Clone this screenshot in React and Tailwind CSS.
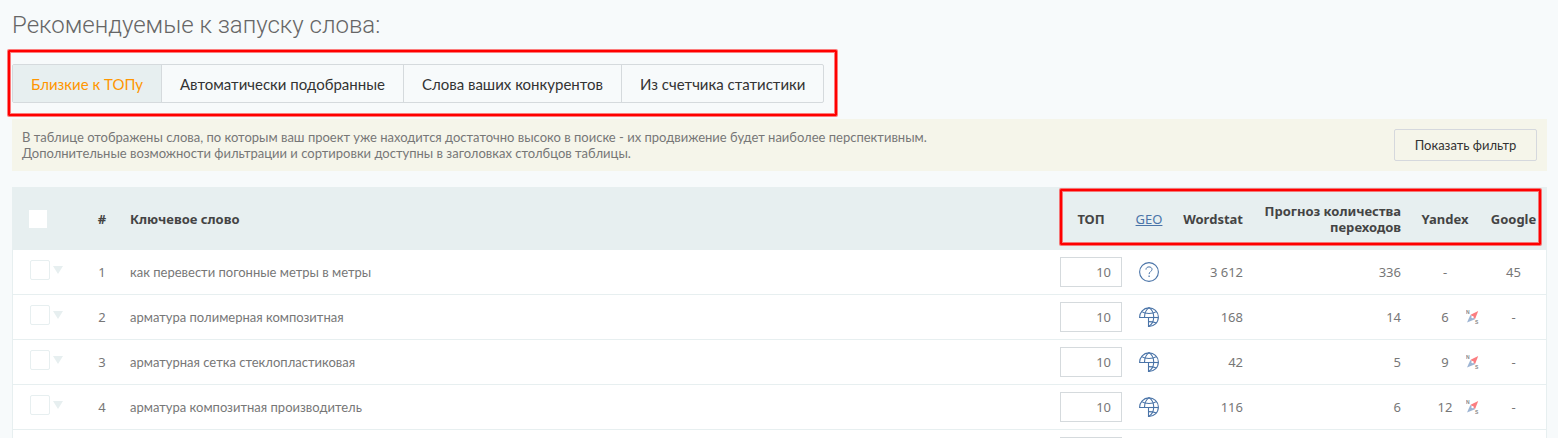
import React from "react";

const tabs = [
  "Близкие к ТОПу",
  "Автоматически подобранные",
  "Слова ваших конкурентов",
  "Из счетчика статистики",
];

const rows = [
  { n: 1, word: "как перевести погонные метры в метры", top: "10", geo: "unknown", wordstat: "3 612", visits: "336", yandex: "-", google: "45" },
  { n: 2, word: "арматура полимерная композитная", top: "10", geo: "globe", wordstat: "168", visits: "14", yandex: "6", compass: true, google: "-" },
  { n: 3, word: "арматурная сетка стеклопластиковая", top: "10", geo: "globe", wordstat: "42", visits: "5", yandex: "9", compass: true, google: "-" },
  { n: 4, word: "арматура композитная производитель", top: "10", geo: "globe", wordstat: "116", visits: "6", yandex: "12", compass: true, google: "-" },
  {},
];

function QuestionIcon() {
  return (
    <svg width="20" height="20" viewBox="0 0 20 20" fill="none" stroke="#4a74a8" className="mx-auto block">
      <circle cx="10" cy="10" r="9.4" strokeWidth="1.1" />
      <path d="M7 7.600C7 5.900 8.300 4.900 10 4.900s3 .9 3 2.500c0 2.100-2.900 2.200-2.900 4.700" strokeWidth="1" />
      <path d="M10.100 13.500v1.500" strokeWidth="1.200" />
    </svg>
  );
}

function GlobeIcon() {
  return (
    <svg width="20" height="20" viewBox="0 0 20 20" fill="none" stroke="#4a74a8" strokeWidth="1.1" className="mx-auto block">
      <path d="M.6 10.500A9.400 9.400 0 0 1 19.400 10 9.400 9.400 0 0 1 9.500 19.400V10.500Z" />
      <path d="M9.500 10.500H19.400" />
      <path d="M5.500 10.300C5.500 6 7.300 2.500 10 .6c2.900 1.900 4.700 5 4.700 9.400s-1.800 7.500-5 9.400" />
      <path d="M2.600 4.600c2 1.300 4.500 1.900 7.400 1.900s5.400-.6 7.400-1.900M9.500 14.600c3.200 0 5.800.5 7.900 1.300" />
    </svg>
  );
}

function CompassIcon() {
  return (
    <svg width="13" height="14" viewBox="0 0 13 14" className="block">
      <path d="M12.200 1 4.600 4.800 9 9.200Z" fill="#fb7d80" />
      <path d="M1 12.600 4.400 5 9 9.200Z" fill="#9db4d3" />
      <circle cx="6.500" cy="7.100" r="1.200" fill="#fff" />
      <text x="0" y="4.200" fontSize="5" fontFamily="Liberation Sans, sans-serif" fontWeight="700" fill="#888">N</text>
      <text x="9" y="13.800" fontSize="5" fontFamily="Liberation Sans, sans-serif" fontWeight="700" fill="#888">S</text>
    </svg>
  );
}

function Row({ row }) {
  return (
    <tr className="h-[45px] *:border-b *:border-[#e7eff0]">
      <td className="pb-1">
        <div className="flex items-center gap-[3px] pl-[17px]">
          <input
            type="checkbox"
            aria-label="Выбрать слово"
            className="size-5 appearance-none rounded-xs border border-[#e7eff0] bg-white"
          />
          <svg width="10" height="8" viewBox="0 0 10 8" className="block">
            <path d="M0 0H10L5 8Z" fill="#e7eff0" />
          </svg>
        </div>
      </td>
      <td className="text-center font-['Noto_Sans',sans-serif]">{row.n}</td>
      <td className="pl-2">{row.word}</td>
      <td className="px-[9px]">
        <input
          type="text"
          defaultValue={row.top}
          aria-label="ТОП"
          className="block h-[30px] w-full border border-[#d5dadd] bg-white pr-2.5 text-right font-['Noto_Sans',sans-serif] text-[#777]"
        />
      </td>
      <td>{row.geo === "unknown" && <QuestionIcon />}{row.geo === "globe" && <GlobeIcon />}</td>
      <td className="pr-2 text-right font-['Noto_Sans',sans-serif]">{row.wordstat}</td>
      <td className="pr-2 text-right font-['Noto_Sans',sans-serif]">{row.visits}</td>
      <td className="font-['Noto_Sans',sans-serif]">
        <div className="grid grid-cols-3 items-center">
          <span className="col-start-2 text-center">{row.yandex}</span>
          {row.compass && <span className="pl-[9px]"><CompassIcon /></span>}
        </div>
      </td>
      <td className="text-center font-['Noto_Sans',sans-serif]">{row.google}</td>
    </tr>
  );
}

function Highlight({ className }) {
  return (
    <div
      aria-hidden="true"
      className={`pointer-events-none absolute rounded-[1px] border-2 border-[#ff0000] ring-1 inset-ring-1 inset-ring-[#ff0000]/50 ring-[#ff0000]/50 ${className}`}
    />
  );
}

export default function App() {
  return (
    <main className="h-screen overflow-hidden bg-[#f7fafb] pr-[11px] pl-3 pt-[9px] font-['Lato','Liberation_Sans',sans-serif] text-[13px] leading-4 text-[#777]">
      <h1 className="font-['Roboto',sans-serif] text-[24px] leading-8 font-light text-[#666]">
        Рекомендуемые к запуску слова:
      </h1>

      <div className="relative mt-[23px] w-fit">
        <nav className="flex divide-x divide-[#d5dadd] rounded-xs border border-[#d5dadd] text-[15px] text-[#333]">
          {tabs.map((tab, i) => (
            <button
              key={tab}
              type="button"
              className={`h-[37px] px-[18px] ${i === 0 ? "bg-[#e7eff0] text-[#ff9600]" : ""}`}
            >
              {tab}
            </button>
          ))}
        </nav>
        <Highlight className="-top-[14px] -right-[13px] -bottom-[13px] -left-1" />
      </div>

      <section className="mt-4 flex h-[52px] items-center justify-between bg-[#f5f5ea] px-2.5">
        <p>
          В таблице отображены слова, по которым ваш проект уже находится достаточно высоко в поиске - их продвижение будет наиболее перспективным.
          <br />
          Дополнительные возможности фильтрации и сортировки доступны в заголовках столбцов таблицы.
        </p>
        <button type="button" className="h-8 w-[143px] shrink-0 rounded-xs border border-[#d5d8dd] text-[#333]">
          Показать фильтр
        </button>
      </section>

      <div className="relative mt-4">
        <table className="w-full table-fixed border-separate border-spacing-0 border-x border-[#e7eff0] bg-white">
          <colgroup>
            <col className="w-[69px]" />
            <col className="w-10" />
            <col />
            <col className="w-20" />
            <col className="w-9" />
            <col className="w-[84px]" />
            <col className="w-[158px]" />
            <col className="w-[72px]" />
            <col className="w-[65px]" />
          </colgroup>
          <thead className="bg-[#e7eff0] font-['Noto_Sans',sans-serif] text-[#444]">
            <tr className="h-[63px]">
              <th className="pl-4 text-left">
                <input
                  type="checkbox"
                  aria-label="Выбрать все слова"
                  className="block size-[18px] appearance-none bg-white"
                />
              </th>
              <th>#</th>
              <th className="pl-2 text-left">Ключевое слово</th>
              <th>ТОП</th>
              <th className="font-normal">
                <a href="#geo" className="text-[#4a74a8] underline">GEO</a>
              </th>
              <th className="pr-2 text-right">Wordstat</th>
              <th className="pr-2 text-right">Прогноз количества переходов</th>
              <th>Yandex</th>
              <th>Google</th>
            </tr>
          </thead>
          <tbody>
            {rows.map((row, i) => (
              <Row key={i} row={row} />
            ))}
          </tbody>
        </table>
        <Highlight className="top-0.5 right-1.5 h-14 w-[481px]" />
      </div>
    </main>
  );
}
